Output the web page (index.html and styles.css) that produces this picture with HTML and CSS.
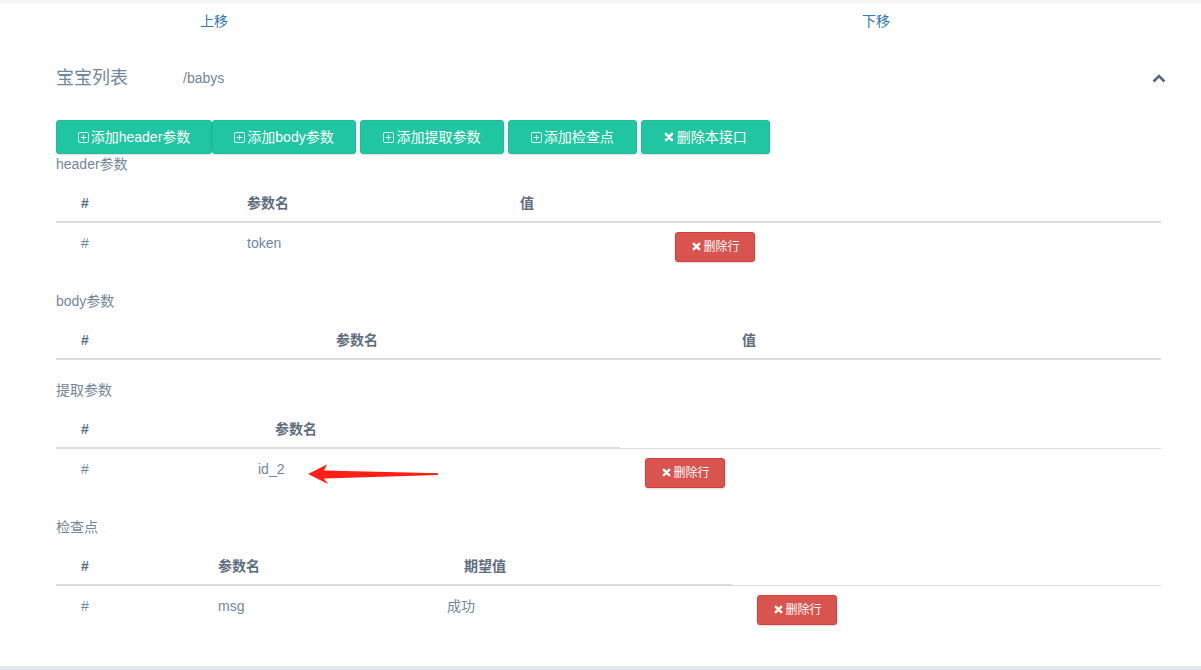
FILE: index.html
```html
<!DOCTYPE html>
<html lang="zh-CN">
<head>
    <meta charset="UTF-8">
    <title>接口编辑</title>
    <link rel="stylesheet" href="styles.css">
</head>
<body>

    <div class="panel">
        <div class="move-row">
            <a class="move up">上移</a>
            <a class="move down">下移</a>
        </div>

        <!-- 接口标题 -->
        <div class="api-title">
            <h2>宝宝列表</h2>
            <span class="api-path">/babys</span>
            <a class="collapse-link">
                <svg width="14" height="9" viewBox="0 0 14 9"><polyline points="1.5,7.5 7,2 12.5,7.5" fill="none" stroke="#5b6776" stroke-width="2.6"/></svg>
            </a>
        </div>

        <div class="toolbar">
            <button class="btn btn-add w-header"><svg class="ico-plus" width="11" height="11" viewBox="0 0 12 12"><rect x="0.5" y="0.5" width="11" height="11" rx="1.5" fill="none" stroke="#fff"/><path d="M6 3v6M3 6h6" stroke="#fff"/></svg>添加header参数</button><button class="btn btn-add w-body"><svg class="ico-plus" width="11" height="11" viewBox="0 0 12 12"><rect x="0.5" y="0.5" width="11" height="11" rx="1.5" fill="none" stroke="#fff"/><path d="M6 3v6M3 6h6" stroke="#fff"/></svg>添加body参数</button>
            <button class="btn btn-add w-extract"><svg class="ico-plus" width="11" height="11" viewBox="0 0 12 12"><rect x="0.5" y="0.5" width="11" height="11" rx="1.5" fill="none" stroke="#fff"/><path d="M6 3v6M3 6h6" stroke="#fff"/></svg>添加提取参数</button>
            <button class="btn btn-add w-short"><svg class="ico-plus" width="11" height="11" viewBox="0 0 12 12"><rect x="0.5" y="0.5" width="11" height="11" rx="1.5" fill="none" stroke="#fff"/><path d="M6 3v6M3 6h6" stroke="#fff"/></svg>添加检查点</button>
            <button class="btn btn-add w-short"><svg class="ico-x" width="10" height="10" viewBox="0 0 10 10"><path d="M2 2L8 8M8 2L2 8" stroke="#fff" stroke-width="2.6" stroke-linecap="round"/></svg>删除本接口</button>
        </div>

        <!-- header参数 -->
        <div class="block-label first">header参数</div>
        <div class="ptable t-header">
            <div class="prow thead">
                <div class="cell c1">#</div>
                <div class="cell c2">参数名</div>
                <div class="cell c3">值</div>
            </div>
            <div class="prow tbody">
                <div class="cell c1">#</div>
                <div class="cell c2b">token</div>
                <div class="cell"><button class="btn-del"><svg class="ico-x" width="9" height="9" viewBox="0 0 10 10"><path d="M2 2L8 8M8 2L2 8" stroke="#fff" stroke-width="2.8" stroke-linecap="round"/></svg>删除行</button></div>
            </div>
        </div>

        <!-- body参数 -->
        <div class="block-label">body参数</div>
        <div class="ptable t-body">
            <div class="prow thead">
                <div class="cell c1">#</div>
                <div class="cell c2">参数名</div>
                <div class="cell c3">值</div>
            </div>
        </div>

        <!-- 提取参数 -->
        <div class="block-label">提取参数</div>
        <div class="ptable t-extract">
            <div class="prow thead">
                <div class="cell c1">#</div>
                <div class="cell c2">参数名</div>
            </div>
            <div class="prow tbody">
                <div class="cell c1b">#</div>
                <div class="cell c2b marked">id_2
                    <svg class="arrow-mark" width="132" height="24" viewBox="0 0 132 24"><path d="M0 12 L19 2.5 L16 8.5 L130 11.3 L130 13 L16 16.5 L20 22 Z" fill="#ff1f16"/></svg>
                </div>
                <div class="cell"><button class="btn-del"><svg class="ico-x" width="9" height="9" viewBox="0 0 10 10"><path d="M2 2L8 8M8 2L2 8" stroke="#fff" stroke-width="2.8" stroke-linecap="round"/></svg>删除行</button></div>
            </div>
        </div>

        <!-- 检查点 -->
        <div class="block-label">检查点</div>
        <div class="ptable t-check">
            <div class="prow thead">
                <div class="cell c1">#</div>
                <div class="cell c2">参数名</div>
                <div class="cell c3">期望值</div>
            </div>
            <div class="prow tbody">
                <div class="cell c1">#</div>
                <div class="cell c2b">msg</div>
                <div class="cell c3b">成功</div>
                <div class="cell"><button class="btn-del"><svg class="ico-x" width="9" height="9" viewBox="0 0 10 10"><path d="M2 2L8 8M8 2L2 8" stroke="#fff" stroke-width="2.8" stroke-linecap="round"/></svg>删除行</button></div>
            </div>
        </div>
    </div>

</body>
</html>
```

FILE: styles.css
```css
body {
    margin: 0;
    background: #e6e9ed;
    font-family: "Liberation Sans", "Noto Sans CJK SC", sans-serif;
    font-size: 14px;
    color: #73879C;
}
.panel {
    background: #fff;
    border-top: 3px solid #f6f6f6;
    height: 666px;
    box-sizing: border-box;
    padding: 0 40px 0 56px;
}
.move-row {
    display: flex;
    padding-top: 8px;
    line-height: 20px;
}
.move {
    color: #337ab7;
    text-decoration: none;
    cursor: pointer;
}
.move.up {
    margin-left: 144px;
}
.move.down {
    margin-left: 634px;
}
.api-title {
    display: flex;
    align-items: center;
    height: 24px;
    margin-top: 35px;
}
.api-title h2 {
    margin: 0;
    font-size: 18px;
    font-weight: normal;
    line-height: 24px;
}
.api-path {
    margin-left: 55px;
}
.collapse-link {
    margin-left: auto;
    margin-right: -5px;
    display: flex;
}
.toolbar {
    margin-top: 30px;
    height: 34px;
}
.btn {
    display: inline-block;
    vertical-align: top;
    height: 34px;
    box-sizing: border-box;
    padding: 6px 0;
    border: 1px solid #1dbf9b;
    border-radius: 3px;
    background: #20c5a1;
    color: #fff;
    font-family: inherit;
    font-size: 14px;
    line-height: 20px;
    text-align: center;
    white-space: nowrap;
    box-shadow: 0 1px 2px rgba(0, 0, 0, 0.15);
    cursor: pointer;
}
.w-header { width: 156px; }
.w-body { width: 144px; }
.w-extract { width: 144px; }
.w-short { width: 129px; }
.ico-plus {
    vertical-align: -1px;
    margin-right: 2px;
}
.btn .ico-x {
    vertical-align: 0;
    margin-right: 3px;
}
.block-label {
    line-height: 20px;
    margin-top: 20px;
}
.block-label.first {
    margin-top: 0;
}
.ptable {
    margin-top: 11px;
}
.prow {
    display: flex;
    align-items: flex-start;
}
.cell {
    box-sizing: border-box;
    flex: none;
}
.thead .cell {
    padding: 8px 0;
    line-height: 20px;
    font-weight: bold;
    color: #5f6e7e;
}
.tbody .cell {
    padding: 9px 0;
    line-height: 22px;
}
.thead {
    border-bottom: 2px solid #ddd;
}
.tbody {
    border-top: 1px solid #ddd;
    margin-top: -1px;
}
.c1, .c1b {
    padding-left: 25px !important;
}

/* 每个表格的列宽 */
.t-header .c1 { width: 191px; }
.t-header .c2 { width: 273px; }
.t-header .c2b { width: 428px; }

.t-body .c1 { width: 280px; }
.t-body .c2 { width: 406px; }

.t-extract .thead { width: 564px; }
.t-extract .c1 { width: 219px; }
.t-extract .c1b { width: 202px; }
.t-extract .c2b { width: 387px; }

.t-check .thead { width: 676px; }
.t-check .c1 { width: 162px; }
.t-check .c2 { width: 246px; }
.t-check .c2b { width: 229px; }
.t-check .c3b { width: 310px; }

.btn-del {
    display: block;
    width: 80px;
    height: 30px;
    box-sizing: border-box;
    padding: 0 0 0 2px;
    border: 1px solid #d43f3a;
    border-radius: 3px;
    background: #d9534f;
    color: #fff;
    font-family: inherit;
    font-size: 12px;
    line-height: 28px;
    box-shadow: 0 1px 2px rgba(0, 0, 0, 0.15);
    cursor: pointer;
}
.btn-del .ico-x {
    vertical-align: 0;
    margin-right: 2px;
}
.marked {
    position: relative;
}
.arrow-mark {
    position: absolute;
    left: 50px;
    top: 13px;
}
```
